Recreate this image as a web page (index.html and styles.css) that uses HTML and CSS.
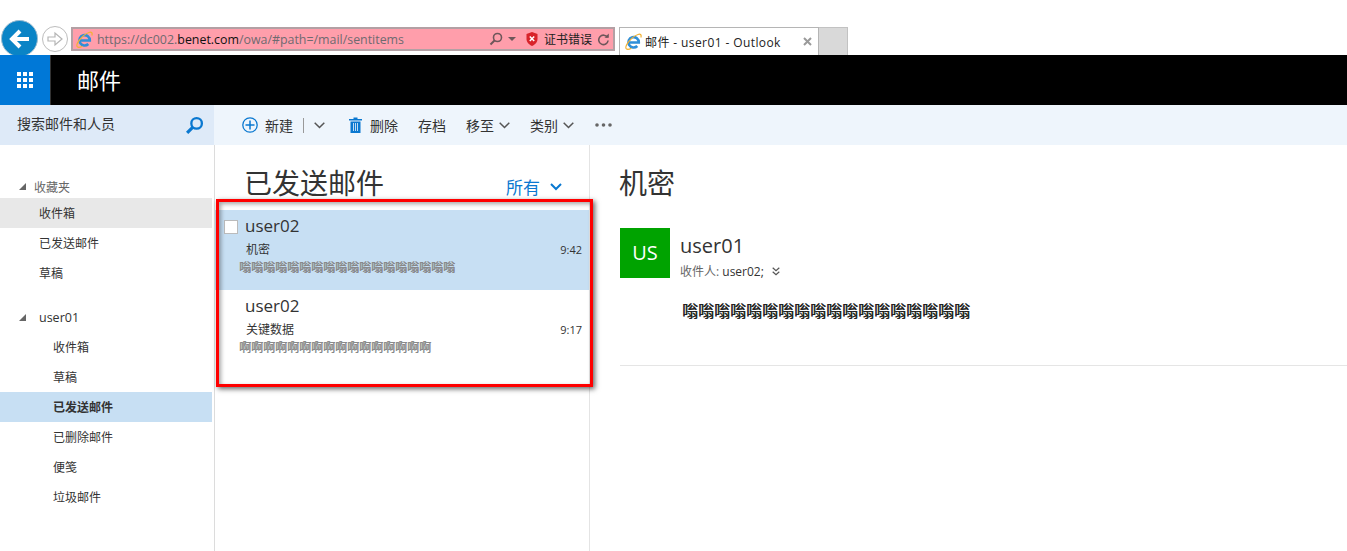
FILE: index.html
```html
<!DOCTYPE html>
<html lang="zh-CN">
<head>
    <meta charset="UTF-8">
    <title>邮件 - user01 - Outlook</title>
    <link rel="stylesheet" href="styles.css">
</head>
<body>
    <svg class="defs" width="0" height="0">
        <defs>
            <g id="ie">
                <path d="M4 9.500h9.800a5.200 5.200 0 1 0-1.500 3.500" fill="none" stroke="#2f8fd8" stroke-width="2.600"/>
                <path d="M1.200 15.700C-.6 13.300 6 4 13 1.500c2.600-.9 3.800.5 2.800 3M1.200 15.700c1 1.100 3.200.6 5.200-.5" fill="none" stroke="#f2b233" stroke-width="1.200"/>
            </g>
            <path id="chev" d="M.7.7l4.800 4.800L10.300.7" fill="none" stroke="#555" stroke-width="1.500"/>
        </defs>
    </svg>

    <div class="browser-bar">
        <div class="back-btn">
            <svg width="24" height="24" viewBox="0 0 24 24"><path d="M21 12H5M12 4l-8 8 8 8" fill="none" stroke="#fff" stroke-width="4"/></svg>
        </div>
        <div class="forward-btn">
            <svg width="18" height="18" viewBox="0 0 18 18"><path d="M2 7h7V3l7 6-7 6v-4H2z" fill="none" stroke="#b5b5b5" stroke-width="1.2"/></svg>
        </div>
        <div class="address-bar">
            <svg class="ie-icon" width="17" height="17" viewBox="0 0 17 17"><use href="#ie"/></svg>
            <span class="url">https://dc002.<b>benet.com</b>/owa/#path=/mail/sentitems</span>
            <svg class="addr-search" width="14" height="14" viewBox="0 0 14 14"><circle cx="8.5" cy="5.5" r="4" fill="none" stroke="#6e565a" stroke-width="1.6"/><path d="M5.5 8.5L1.5 12.5" stroke="#6e565a" stroke-width="2"/></svg>
            <span class="addr-caret"></span>
            <svg class="cert-icon" width="12" height="14" viewBox="0 0 12 14"><path d="M6 0l5.500 2v5c0 3.500-2.500 5.500-5.500 7-3-1.500-5.500-3.500-5.500-7V2z" fill="#d8232a"/><path d="M3.800 4.500l4.400 4.600M8.200 4.500L3.800 9.100" stroke="#fff" stroke-width="1.500"/></svg>
            <span class="cert-text">证书错误</span>
            <svg class="addr-refresh" width="13" height="13" viewBox="0 0 13 13"><path d="M10.500 4.500a4.700 4.700 0 1 0 .6 3" fill="none" stroke="#6e565a" stroke-width="1.600"/><path d="M7.500 4.800h4.300V.5z" fill="#6e565a"/></svg>
        </div>
        <div class="tab">
            <svg class="ie-icon" width="17" height="17" viewBox="0 0 17 17"><use href="#ie"/></svg>
            <span class="tab-title">邮件 - user01 - Outlook</span>
            <svg class="tab-close" width="9" height="9" viewBox="0 0 9 9"><path d="M1 1l7 7M8 1L1 8" stroke="#9a9a9a" stroke-width="2"/></svg>
        </div>
        <div class="new-tab"></div>
    </div>

    <div class="suite-bar">
        <div class="app-tile">
            <svg width="16" height="16" viewBox="0 0 16 16" fill="#fff">
                <rect width="4" height="4"/><rect x="6" width="4" height="4"/><rect x="12" width="4" height="4"/>
                <rect y="6" width="4" height="4"/><rect x="6" y="6" width="4" height="4"/><rect x="12" y="6" width="4" height="4"/>
                <rect y="12" width="4" height="4"/><rect x="6" y="12" width="4" height="4"/><rect x="12" y="12" width="4" height="4"/>
            </svg>
        </div>
        <div class="app-name">邮件</div>
    </div>

    <div class="command-row">
        <div class="search-box">
            <span class="search-text">搜索邮件和人员</span>
            <svg width="19" height="19" viewBox="0 0 18 18"><circle cx="11" cy="7" r="5" fill="none" stroke="#0a78d0" stroke-width="2.200"/><path d="M7.500 10.500L2 16" stroke="#0a78d0" stroke-width="3"/></svg>
        </div>
        <div class="toolbar">
            <svg class="plus-icon" width="16" height="16" viewBox="0 0 16 16"><circle cx="8" cy="8" r="7.200" fill="none" stroke="#0a78d0" stroke-width="1.300"/><path d="M8 3.500v9M3.500 8h9" stroke="#0a78d0" stroke-width="1.500"/></svg>
            <span class="cmd cmd-new">新建</span>
            <span class="cmd-sep"></span>
            <svg class="chev chev-new" width="11" height="7" viewBox="0 0 11 7"><use href="#chev"/></svg>
            <svg class="trash-icon" width="13" height="16" viewBox="0 0 13 16"><path d="M0 2h4.500V.5h4V2H13v1.500H0zM1.500 4.500h10V16h-10z" fill="#0a78d0"/><path d="M4.500 6v8M6.500 6v8M8.500 6v8" stroke="#eef5fc" stroke-width=".8"/></svg>
            <span class="cmd cmd-delete">删除</span>
            <span class="cmd cmd-archive">存档</span>
            <span class="cmd cmd-move">移至</span>
            <svg class="chev" width="11" height="7" viewBox="0 0 11 7"><use href="#chev"/></svg>
            <span class="cmd cmd-category">类别</span>
            <svg class="chev" width="11" height="7" viewBox="0 0 11 7"><use href="#chev"/></svg>
            <svg class="dots" width="17" height="4" viewBox="0 0 17 4" fill="#666"><circle cx="2" cy="2" r="1.800"/><circle cx="8.500" cy="2" r="1.800"/><circle cx="15" cy="2" r="1.800"/></svg>
        </div>
    </div>

    <div class="main">
        <nav class="folders">
            <div class="group-head group-fav"><span class="tri"></span><span class="fav-label">收藏夹</span></div>
            <div class="folder fav active">收件箱</div>
            <div class="folder fav">已发送邮件</div>
            <div class="folder fav">草稿</div>
            <div class="group-head group-user"><span class="tri"></span><span class="user-label">user01</span></div>
            <div class="folder">收件箱</div>
            <div class="folder">草稿</div>
            <div class="folder selected">已发送邮件</div>
            <div class="folder">已删除邮件</div>
            <div class="folder">便笺</div>
            <div class="folder">垃圾邮件</div>
        </nav>

        <section class="mail-list">
            <div class="list-head">
                <h2>已发送邮件</h2>
                <span class="filter">所有</span>
                <svg class="filter-chev" width="12" height="8" viewBox="0 0 12 8"><path d="M1 1l5 5 5-5" fill="none" stroke="#0a78d0" stroke-width="2"/></svg>
            </div>
            <div class="mail-row current">
                <span class="check"></span>
                <div class="sender">user02</div>
                <div class="subject-line"><span>机密</span><span class="time">9:42</span></div>
                <div class="preview">嗡嗡嗡嗡嗡嗡嗡嗡嗡嗡嗡嗡嗡嗡嗡嗡嗡嗡</div>
            </div>
            <div class="mail-row">
                <div class="sender">user02</div>
                <div class="subject-line"><span>关键数据</span><span class="time">9:17</span></div>
                <div class="preview">啊啊啊啊啊啊啊啊啊啊啊啊啊啊啊啊</div>
            </div>
        </section>

        <section class="reading">
            <h2>机密</h2>
            <div class="mail-head">
                <div class="avatar">US</div>
                <div>
                    <div class="from">user01</div>
                    <div class="to">收件人: <span>user02;</span>
                        <svg width="8" height="9" viewBox="0 0 8 9"><path d="M.7.7L4 3.700 7.300.7M.7 4.700L4 7.700l3.300-3" fill="none" stroke="#555" stroke-width="1.200"/></svg>
                    </div>
                </div>
            </div>
            <div class="mail-body">嗡嗡嗡嗡嗡嗡嗡嗡嗡嗡嗡嗡嗡嗡嗡嗡嗡嗡</div>
            <div class="rule"></div>
        </section>
    </div>

    <div class="red-box"></div>
</body>
</html>
```

FILE: styles.css
```css
* {
    box-sizing: border-box;
}
html, body {
    height: 100%;
}
body {
    margin: 0;
    overflow: hidden;
    background-color: #fff;
    color: #333;
    font-family: "Open Sans", "Noto Sans CJK SC", sans-serif;
}
.defs {
    position: absolute;
}
h2 {
    margin: 0;
    font-weight: 400;
}

/* browser chrome */
.browser-bar {
    display: flex;
    height: 55px;
    padding-top: 21px;
    background-color: #fff;
}
.back-btn {
    display: flex;
    align-items: center;
    justify-content: center;
    width: 37px;
    height: 37px;
    margin: -1px 1px 0 1px;
    border-radius: 50%;
    background-color: #0a84c6;
    border: 1px solid #9dbdd0;
}
.forward-btn {
    display: flex;
    align-items: center;
    justify-content: center;
    width: 26px;
    height: 26px;
    margin: 5px 0 0 3px;
    border-radius: 50%;
    border: 1px solid #bdbdbd;
}
.address-bar {
    display: flex;
    align-items: center;
    width: 544px;
    height: 24px;
    margin: 6px 0 0 3px;
    padding: 0 3px 0 3px;
    background-color: #ff9eab;
    border: 2px solid #b3a0a4;
    font-size: 12.4px;
    color: #6f6a70;
}
.url {
    margin-left: 4px;
    flex: 1;
}
.url b {
    font-weight: 400;
    color: #111;
}
.addr-search {
    margin-right: 5px;
}
.addr-caret {
    width: 0;
    height: 0;
    margin-right: 10px;
    border-style: solid;
    border-width: 4px 4px 0;
    border-color: #6e565a transparent transparent;
}
.cert-text {
    margin: 0 5px 0 6px;
    font-size: 12px;
    color: #222;
}
.tab {
    display: flex;
    align-items: center;
    width: 200px;
    height: 28px;
    margin: 6px 0 0 4px;
    padding: 0 6px 0 5px;
    border: 1px solid #b5b5b5;
    border-bottom: none;
    font-size: 12px;
    letter-spacing: 0.4px;
    color: #222;
}
.tab-title {
    margin-left: 3px;
    flex: 1;
}
.new-tab {
    width: 29px;
    height: 28px;
    margin-top: 6px;
    background-color: #d9d9d9;
    border: 1px solid #c2c2c2;
    border-left: none;
    border-bottom: none;
}

/* suite bar */
.suite-bar {
    display: flex;
    height: 50px;
    background-color: #000;
}
.app-tile {
    display: flex;
    align-items: center;
    justify-content: center;
    width: 51px;
    background-color: #0078d7;
    border-right: 1px solid #333;
}
.app-name {
    margin-left: 26px;
    font-size: 22px;
    line-height: 50px;
    color: #fff;
}

/* search and commands */
.command-row {
    display: flex;
    height: 40px;
}
.search-box {
    display: flex;
    align-items: center;
    justify-content: space-between;
    width: 214px;
    padding: 0 10px 0 17px;
    background-color: #deeaf8;
    font-size: 14px;
    color: #333;
}
.search-text {
    margin-top: -4px;
}
.toolbar {
    display: flex;
    flex: 1;
    align-items: center;
    padding-left: 28px;
    background-color: #eef5fc;
    font-size: 14px;
    color: #333;
}
.cmd-new {
    margin-left: 7px;
}
.cmd-sep {
    width: 1px;
    height: 15px;
    margin: 0 10px;
    background-color: #999;
}
.chev {
    margin-left: 5px;
}
.chev-new {
    margin-left: 0;
}
.trash-icon {
    margin-left: 24px;
}
.cmd-delete {
    margin-left: 8px;
}
.cmd-archive {
    margin-left: 20px;
}
.cmd-move {
    margin-left: 20px;
}
.cmd-category {
    margin-left: 20px;
}
.dots {
    margin-left: 21px;
}

/* main columns */
.main {
    display: flex;
    height: 406px;
}
.folders {
    width: 215px;
    padding: 27px 2px 0 0;
    border-right: 1px solid #dcdcdc;
    font-size: 12px;
}
.group-head {
    display: flex;
    align-items: center;
    padding-left: 19px;
}
.group-fav {
    height: 26px;
    padding-top: 3px;
    color: #666;
}
.group-user {
    height: 44px;
    padding-bottom: 1px;
    padding-top: 15px;
}
.tri {
    width: 0;
    height: 0;
    border-style: solid;
    border-width: 0 0 7px 7px;
    border-color: transparent transparent #666;
}
.fav-label {
    margin-left: 8px;
}
.user-label {
    margin-left: 13px;
    font-size: 12.5px;
}
.folder {
    height: 30px;
    padding-left: 53px;
    line-height: 31px;
    color: #333;
}
.folder.fav {
    padding-left: 39px;
}
.folder.active {
    background-color: #e8e8e8;
}
.folder.selected {
    background-color: #c7dff3;
    font-weight: 700;
}

.mail-list {
    width: 375px;
    border-right: 1px solid #e4e4e4;
}
.list-head {
    display: flex;
    align-items: center;
    height: 65px;
    padding: 21px 0 11px 29px;
}
.list-head h2 {
    font-size: 28px;
    line-height: 36px;
    color: #333;
}
.filter {
    margin: 8px 0 0 122px;
    font-size: 17px;
    color: #0a78d0;
}
.filter-chev {
    margin: 8px 0 0 10px;
}
.mail-row {
    position: relative;
    height: 80px;
    padding: 4px 7px 0 30px;
}
.mail-row.current {
    background-color: #c7dff3;
}
.check {
    position: absolute;
    left: 9px;
    top: 10px;
    width: 14px;
    height: 14px;
    background-color: #fff;
    border: 1px solid #bbb;
}
.sender {
    font-size: 17px;
    line-height: 24px;
    color: #333;
}
.subject-line {
    display: flex;
    justify-content: space-between;
    margin: 3px 0 0 1px;
    font-size: 12px;
    line-height: 18px;
}
.time {
    font-size: 11px;
}
.preview {
    margin-left: -6px;
    font-size: 12px;
    line-height: 18px;
    color: #8a8a8a;
    text-shadow: 0.5px 0 0 #777;
}

.reading {
    flex: 1;
    padding-left: 30px;
}
.reading h2 {
    margin: 20px 0 0 -1px;
    font-size: 28px;
    line-height: 36px;
    color: #333;
}
.mail-head {
    display: flex;
    gap: 10px;
    margin-top: 27px;
}
.avatar {
    width: 50px;
    height: 50px;
    background-color: #00a300;
    color: #fff;
    font-size: 20px;
    line-height: 50px;
    text-align: center;
}
.from {
    font-size: 20px;
    line-height: 30px;
    margin-top: 3px;
}
.to {
    margin-top: 3px;
    font-size: 12px;
    line-height: 16px;
    color: #666;
}
.to span {
    margin-right: 5px;
    color: #333;
}
.mail-body {
    margin: 22px 0 0 62px;
    font-size: 16px;
    line-height: 18px;
    color: #222;
    text-shadow: 0.4px 0 0 #222;
}
.rule {
    height: 1px;
    margin-top: 45px;
    background-color: #e5e5e5;
}

/* annotation drawn over the screenshot */
.red-box {
    position: absolute;
    left: 216px;
    top: 199px;
    width: 377px;
    height: 188px;
    border: 3px solid #f00;
    box-shadow: 2px 2px 5px rgba(0, 0, 0, 0.6), inset 2px 2px 4px rgba(0, 0, 0, 0.35);
}
```
